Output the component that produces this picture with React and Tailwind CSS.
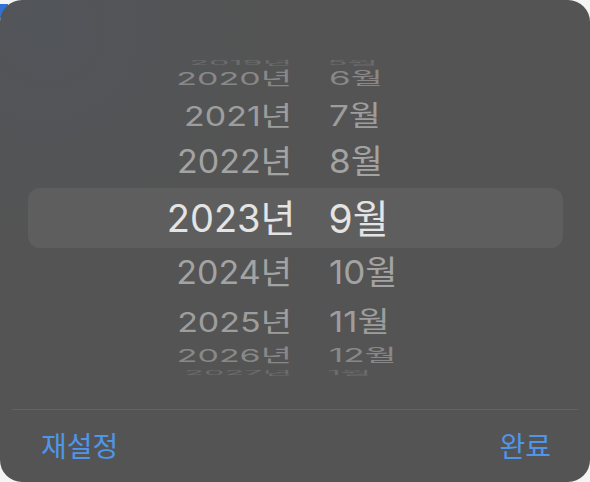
import React from "react";

// 피커 휠 행: 높이, 변형(원통 투영), 글자색
const rows = [
  { year: "2019년", month: "5월", box: "h-[16px]", fx: "scale-x-[0.95] scale-y-[0.17]", color: "text-[#6c6c6c]" },
  { year: "2020년", month: "6월", box: "h-[26px]", fx: "-translate-y-[5px] scale-y-[0.52]", color: "text-[#888888]" },
  { year: "2021년", month: "7월", box: "h-[42px]", fx: "-translate-y-[2px] scale-y-[0.8]", color: "text-[#9d9d9d]" },
  { year: "2022년", month: "8월", box: "h-[50px]", fx: "-translate-y-[2px] scale-y-[0.94]", color: "text-[#a3a3a3]" },
  { year: "2023년", month: "9월", selected: true },
  { year: "2024년", month: "10월", box: "h-[48px]", fx: "scale-y-[0.94]", color: "text-[#a3a3a3]" },
  { year: "2025년", month: "11월", box: "h-[42px]", fx: "translate-y-[4px] scale-y-[0.8]", color: "text-[#9d9d9d]" },
  { year: "2026년", month: "12월", box: "h-[26px]", fx: "translate-y-[4px] scale-y-[0.52]", color: "text-[#888888]" },
  { year: "2027년", month: "1월", box: "h-[16px]", fx: "scale-x-[0.95] scale-y-[0.17]", color: "text-[#6c6c6c]" },
];

const font = "font-['Inter','Noto_Sans_CJK_KR',sans-serif]";

function WheelRow({ row }) {
  if (row.selected) {
    return (
      <div className="mx-[28px] mr-[27px] flex h-[60px] items-center rounded-[12px] bg-[#5e5e5e]">
        <div className="flex w-1/2 justify-end text-[38px] leading-none text-[#e4e4e4]">{row.year}</div>
        <div className="w-1/2 pl-[33px] text-[39px] leading-none text-[#e4e4e4]">{row.month}</div>
      </div>
    );
  }
  return (
    <div className={`flex items-center ${row.box}`}>
      <div className={`flex w-full items-center ${row.fx} ${row.color}`}>
        <div className="flex w-1/2 justify-end pr-[3px] text-[34px] leading-none">{row.year}</div>
        <div className="w-1/2 pl-[34px] text-[35px] leading-none">{row.month}</div>
      </div>
    </div>
  );
}

export default function App() {
  return (
    <div className={`relative h-[482px] w-[590px] overflow-hidden bg-[#f4f4f4] ${font}`}>
      <div className="absolute left-0 top-[4px] h-[14px] w-[8px] bg-[#2f72d6]" />
      <div className="relative flex h-full flex-col rounded-[22px] bg-[radial-gradient(circle_at_8%_6%,#52555a_0%,#545454_30%)]">
        <div className="pt-[54px]">
          {rows.map((row) => (
            <WheelRow key={row.year} row={row} />
          ))}
        </div>
        <div className="mx-[12px] mt-[29px] h-px bg-[#636363]" />
        <div className="flex flex-1 items-center justify-between pb-[1px] pl-[41px] pr-[39px] pt-[3px] text-[28px] leading-none text-[#4f95ea]">
          <button type="button">재설정</button>
          <button type="button">완료</button>
        </div>
      </div>
    </div>
  );
}
